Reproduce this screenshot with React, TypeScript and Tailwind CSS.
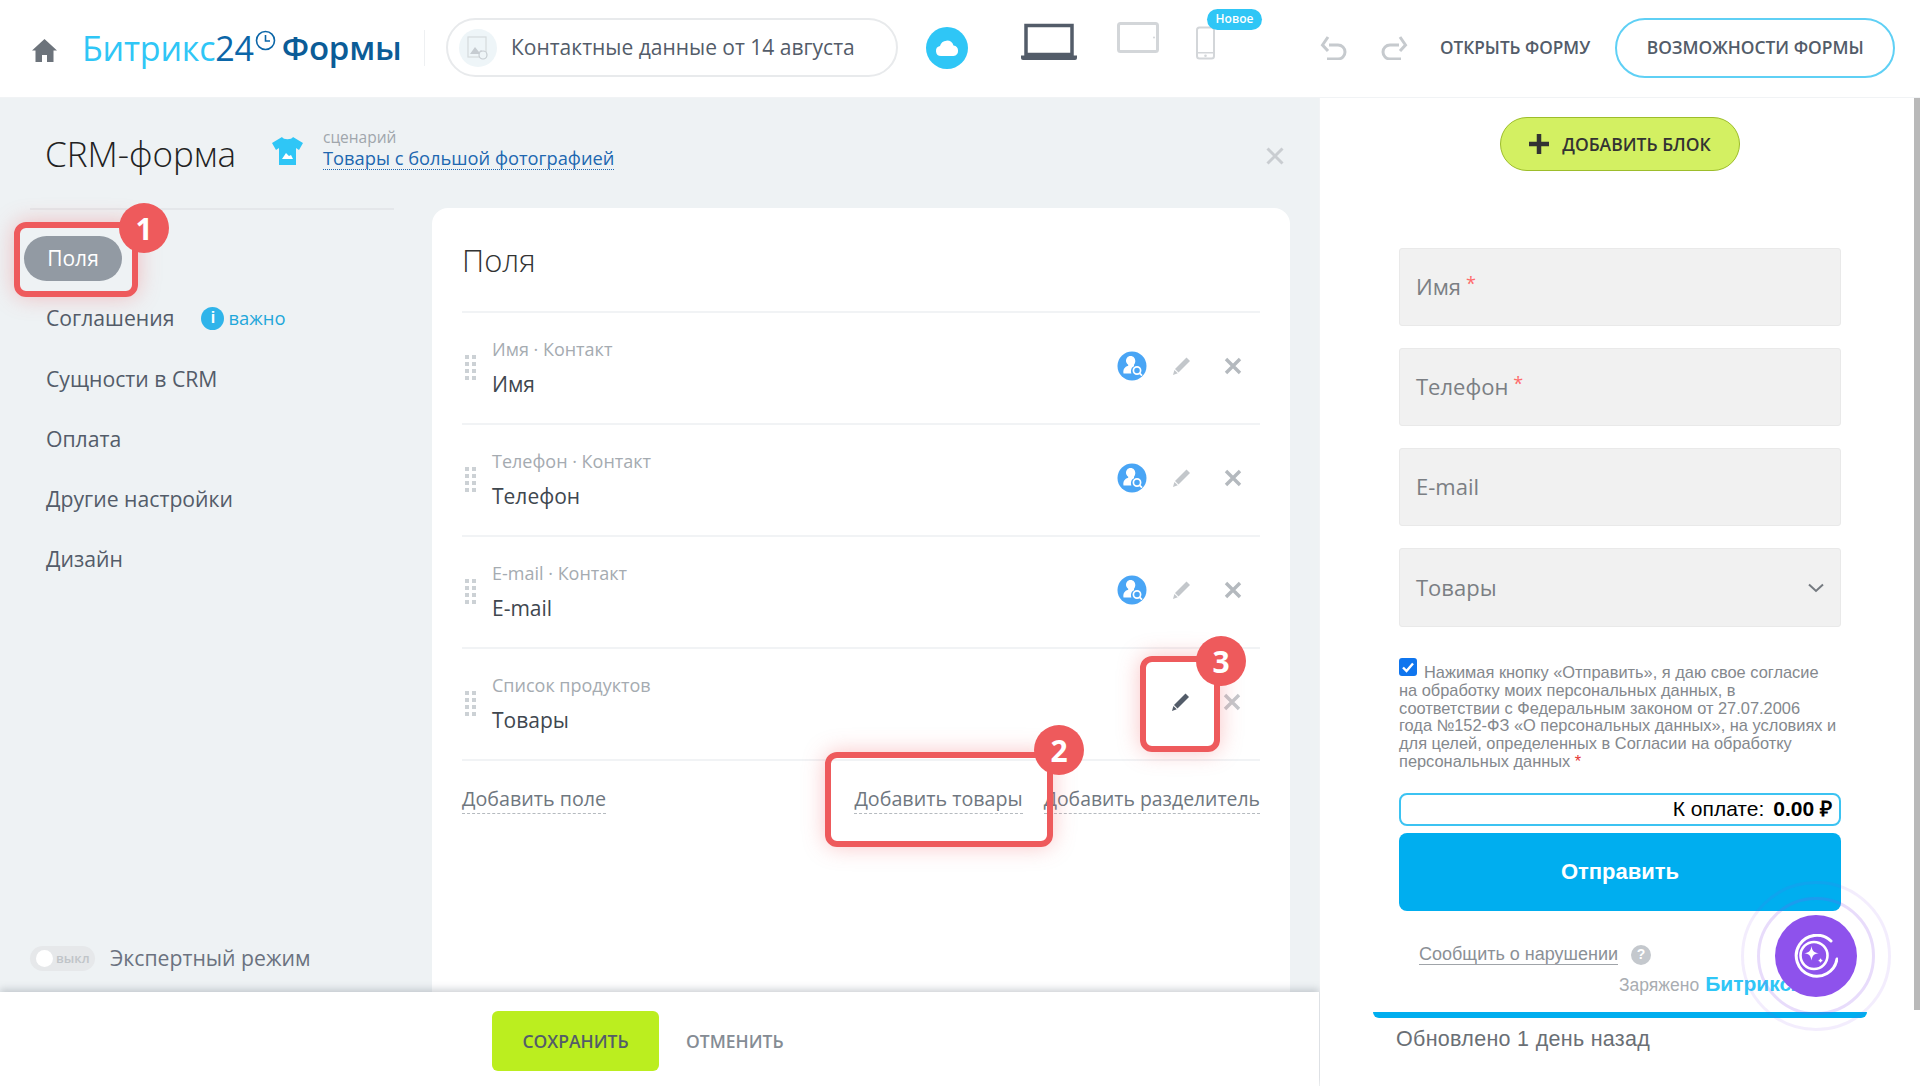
const sans = "font-['Open_Sans','Noto_Sans',sans-serif]";
const arial = "font-['Liberation_Sans',Arial,sans-serif]";

const navItems = ["Соглашения", "Сущности в CRM", "Оплата", "Другие настройки", "Дизайн"];
const fields = [
  { label: "Имя · Контакт", name: "Имя", crm: true },
  { label: "Телефон · Контакт", name: "Телефон", crm: true },
  { label: "E-mail · Контакт", name: "E-mail", crm: true },
  { label: "Список продуктов", name: "Товары", crm: false },
];
const inputs = ["Имя", "Телефон", "E-mail"];

function Pencil({ color = "#c3c7cb" }: { color?: string }) {
  return (
    <svg width="20" height="20" viewBox="0 0 20 20">
      <path d="M14.500 1.500 18 5 6.500 16.500 3 13Z" fill={color} />
      <path d="M2.400 14 5.800 17.300 1 19Z" fill={color} />
    </svg>
  );
}

function Cross({ color = "#b4b9be" }: { color?: string }) {
  return (
    <svg width="18" height="18" viewBox="0 0 18 18">
      <path d="M2 2 16 16M16 2 2 16" stroke={color} strokeWidth="3.400" />
    </svg>
  );
}

function CrmBadge() {
  return (
    <svg width="30" height="30" viewBox="0 0 30 30">
      <circle cx="15" cy="15" r="14.500" fill="#49a5f5" />
      <path d="M13.500 5c3 0 4.800 2.200 4.800 5 0 1.500-.5 2.800-1.300 3.800v1.500c-2.400.8-3.700 3.800-2.600 7.200H6.500c-.6-4 1-6.700 4.700-7.800v-1C10 12.800 9 11.500 9 10c0-2.800 1.800-5 4.500-5Z" fill="#fff" />
      <circle cx="20" cy="19.500" r="3.600" fill="none" stroke="#fff" strokeWidth="1.700" />
      <path d="m22.500 22.200 2.500 2.500" stroke="#fff" strokeWidth="1.800" />
    </svg>
  );
}

function DragDots() {
  return (
    <div className="mb-[2px] ml-[3px] grid w-[11px] grid-cols-2 gap-x-[3px] gap-y-[3px]">
      {Array.from({ length: 8 }).map((_, i) => (
        <span key={i} className="h-1 w-1 bg-[#ccd1d5]" />
      ))}
    </div>
  );
}

function Marker({ className, badge, badgeClass }: { className: string; badge: string; badgeClass: string }) {
  return (
    <div className={`absolute rounded-[12px] border-[6px] border-[#ee5a5c] shadow-[0_0_22px_rgba(238,90,92,0.35)] ${className}`}>
      <div className={`absolute flex h-[50px] w-[50px] items-center justify-center rounded-full bg-[#ee5a5c] text-[30px] font-bold text-white ${badgeClass}`}>
        {badge}
      </div>
    </div>
  );
}

function Header() {
  return (
    <header className="flex h-[98px] shrink-0 items-center border-b border-[#f1f3f5] bg-white pb-[2px]">
      <svg className="ml-[32px] mt-[4px]" width="25" height="24" viewBox="0 0 25 24">
        <path d="M12.500 1 25 12.500h-3.500V24H15v-7h-5v7H3.500V12.500H0Z" fill="#6c737b" />
      </svg>
      <div className="ml-[25px] flex w-[342px] items-start whitespace-nowrap text-[34px] leading-[40px] tracking-[-0.2px]">
        <span className="text-[#2fc6f6]">Битрикс</span>
        <span className="text-[#0b66a8]">24</span>
        <svg className="ml-[1px] mt-[2px]" width="21" height="21" viewBox="0 0 21 21">
          <circle cx="10.500" cy="10.500" r="9" fill="none" stroke="#0b66a8" strokeWidth="1.600" />
          <path d="M10.500 5v6h4.500" fill="none" stroke="#0b66a8" strokeWidth="1.600" />
        </svg>
        <span className="ml-[6px] text-[33px] font-semibold text-[#0b5c97]">Формы</span>
      </div>
      <div className="h-[36px] w-px bg-[#eef0f2]" />
      <div className="ml-[21px] flex h-[59px] w-[452px] items-center rounded-full border-2 border-[#e8eaec] pl-[11px]">
        <div className="flex h-[38px] w-[38px] items-center justify-center rounded-full bg-[#eef5f8]">
          <svg width="22" height="24" viewBox="0 0 22 24">
            <rect x="1" y="1" width="18" height="20" fill="none" stroke="#d5dadd" strokeWidth="1.200" />
            <path d="M3 18l5-7 4 5 2-2 4 4Z" fill="#c6ccd1" />
            <circle cx="16" cy="19" r="4" fill="#eef5f8" stroke="#c6ccd1" strokeWidth="1.200" />
          </svg>
        </div>
        <span className="ml-[14px] text-[21px] text-[#535c69]">Контактные данные от 14 августа</span>
      </div>
      <div className="ml-[28px] flex h-[42px] w-[42px] items-center justify-center rounded-full bg-[#2fc6f6]">
        <svg width="24" height="18" viewBox="0 0 24 18">
          <path d="M6 17a5 5 0 0 1-1-9.900 7 7 0 0 1 13.500-.6A5.300 5.300 0 0 1 18.500 17Z" fill="#fff" />
        </svg>
      </div>
      <svg className="ml-[52px] mb-[12px]" width="58" height="38" viewBox="0 0 58 38">
        <path d="M6 2.500h46v29H6Z" fill="#fff" stroke="#535c69" strokeWidth="3.500" />
        <path d="M1 32.500h56v2.500a2 2 0 0 1-2 2H3a2 2 0 0 1-2-2Z" fill="#535c69" />
      </svg>
      <svg className="ml-[39px] mb-[20px]" width="42" height="31" viewBox="0 0 42 31">
        <rect x="1.500" y="1.500" width="39" height="28" rx="2" fill="#fff" stroke="#d3d6d9" strokeWidth="3" />
        <circle cx="37" cy="15.500" r="1" fill="#d3d6d9" />
      </svg>
      <div className="relative ml-[36px] mb-[10px]">
        <svg width="22" height="34" viewBox="0 0 22 34">
          <rect x="2" y="1.500" width="17" height="31" rx="2.500" fill="#fff" stroke="#d3d6d9" strokeWidth="2" />
          <rect x="2" y="26" width="17" height="1.500" fill="#d3d6d9" />
          <circle cx="10.500" cy="29.800" r="1.300" fill="#d3d6d9" />
        </svg>
        <span className="absolute left-[12px] top-[-17px] flex h-[21px] w-[55px] items-center justify-center rounded-full bg-[#2fc6f6] text-[12px] font-semibold text-white">
          Новое
        </span>
      </div>
      <svg className="ml-[103px]" width="28" height="24" viewBox="0 0 28 24">
        <path d="M9 9h9a7 7 0 0 1 0 14H7" fill="none" stroke="#c6cace" strokeWidth="3" />
        <path d="M8 1 2.500 9 8 15" fill="none" stroke="#c6cace" strokeWidth="3" />
      </svg>
      <svg className="ml-[32px]" width="28" height="24" viewBox="0 0 28 24">
        <path d="M19 9h-9a7 7 0 0 0 0 14h11" fill="none" stroke="#c6cace" strokeWidth="3" />
        <path d="M20 1l5.500 8L20 15" fill="none" stroke="#c6cace" strokeWidth="3" />
      </svg>
      <span className="ml-[32px] whitespace-nowrap text-[17.200px] font-semibold text-[#535c69]">ОТКРЫТЬ ФОРМУ</span>
      <div className="ml-[25px] flex h-[60px] w-[280px] items-center justify-center rounded-full border-2 border-[#5fd0f5] text-[17.400px] font-semibold text-[#535c69]">
        ВОЗМОЖНОСТИ ФОРМЫ
      </div>
    </header>
  );
}

function Sidebar() {
  return (
    <aside className="flex w-[432px] shrink-0 flex-col pl-[24px]">
      <div className="ml-[6px] w-[364px] border-t-2 border-[#e4e7ea]" />
      <div className="mt-[26px] flex h-[45px] w-[98px] items-center justify-center rounded-full bg-[#929aa3] pt-[1px] text-[21px] text-white">
        Поля
      </div>
      <ul className="mt-[7px] flex flex-col pl-[22px] text-[21.200px] text-[#535c69]">
        {navItems.map((item, i) => (
          <li key={item} className="flex h-[60.300px] items-center">
            {item}
            {i === 0 && (
              <span className="ml-[27px] flex items-center text-[18.400px] text-[#1fa7da]">
                <span className={`mr-[4px] flex h-[23px] w-[23px] items-center justify-center rounded-full bg-[#2fb4ea] text-[16px] font-bold text-white ${arial}`}>
                  i
                </span>
                важно
              </span>
            )}
          </li>
        ))}
      </ul>
      <div className="mt-auto mb-[18px] ml-[6px] flex items-center">
        <div className="flex h-[25px] w-[65px] items-center rounded-full bg-[#e6e8ea] pl-[6px]">
          <span className="h-[17px] w-[17px] rounded-full bg-white" />
          <span className="ml-[3px] text-[13px] font-semibold leading-none text-[#c0c4c8]">выкл</span>
        </div>
        <span className="ml-[15px] text-[21.200px] text-[#6b7280]">Экспертный режим</span>
      </div>
    </aside>
  );
}

function FieldsCard() {
  return (
    <section className="w-[858px] rounded-t-[16px] bg-white px-[30px]">
      <h2 className="flex h-[103px] items-center pt-[2px] text-[31px] font-light text-[#333]">Поля</h2>
      {fields.map((f) => (
        <div key={f.label} className="flex h-[112px] items-center border-t-2 border-[#f1f3f5]">
          <DragDots />
          <div className="ml-[16px] flex-1 pb-[2px]">
            <div className="text-[18px] leading-[24px] text-[#a5abb1]">{f.label}</div>
            <div className="mt-[9px] text-[21px] leading-[28px] text-[#40474f]">{f.name}</div>
          </div>
          {f.crm ? (
            <div className="mb-[5px] flex items-center">
              <CrmBadge />
              <span className="ml-[25px]"><Pencil /></span>
              <span className="ml-[32px] mr-[18px]"><Cross /></span>
            </div>
          ) : (
            <div className="mb-[4px] flex items-center">
              <Pencil color="#535c69" />
              <span className="ml-[32px] mr-[19px]"><Cross color="#c3c7cb" /></span>
            </div>
          )}
        </div>
      ))}
      <div className="flex items-start justify-between border-t-2 border-[#f1f3f5] pt-[24px] text-[19.700px] leading-[28px] text-[#6f7780]">
        <span className="border-b border-dashed border-[#b5babf]">Добавить поле</span>
        <div className="flex gap-[21px]">
          <span className="border-b border-dashed border-[#b5babf]">Добавить товары</span>
          <span className="border-b border-dashed border-[#b5babf] text-[19.400px]">Добавить разделитель</span>
        </div>
      </div>
    </section>
  );
}

function FormPreview() {
  return (
    <aside className="relative flex flex-1 flex-col items-center overflow-hidden bg-white">
      <div className="absolute right-0 top-0 h-[912px] w-[6px] bg-[#b9b9b9]" />
      <div className="mt-[19px] flex h-[54px] w-[240px] items-center justify-center rounded-full border border-[#9dbd2b] bg-[#d3f062] text-[17.500px] font-semibold text-[#333]">
        <svg className="mr-[13px]" width="20" height="20" viewBox="0 0 20 20">
          <path d="M10 0v20M0 10h20" stroke="#333" strokeWidth="4.500" />
        </svg>
        ДОБАВИТЬ БЛОК
      </div>
      <div className="mt-[77px] flex w-[442px] flex-col gap-[22px]">
        {inputs.map((p) => (
          <div key={p} className="flex h-[78px] items-center rounded-[3px] border border-[#e9e9e9] bg-[#f1f1f1] pb-[2px] pl-[16px] text-[22px] text-[#7b7f84]">
            {p}
            {p !== "E-mail" && <span className="ml-[5px] -translate-y-[3px] text-[18px] text-[#ff6b6b]">*</span>}
          </div>
        ))}
        <div className="flex h-[79px] items-center justify-between rounded-[3px] border border-[#e9e9e9] bg-[#f1f1f1] px-[16px] text-[22px] text-[#7b7f84]">
          Товары
          <svg width="16" height="10" viewBox="0 0 16 10">
            <path d="M1 1.500 8 8l7-6.500" fill="none" stroke="#757a80" strokeWidth="2" />
          </svg>
        </div>
      </div>
      <div className={`mt-[30px] h-[120px] w-[442px] whitespace-nowrap pt-[3px] text-[16.400px] leading-[17.800px] text-[#84888d] ${arial}`}>
        <svg className="mr-[7px] inline-block -translate-y-[2px] align-baseline" width="18" height="18" viewBox="0 0 18 18">
          <rect width="18" height="18" rx="3" fill="#0f75ee" />
          <path d="M4 9.500 7.500 13 14 5.500" fill="none" stroke="#fff" strokeWidth="2.400" />
        </svg>
        Нажимая кнопку «Отправить», я даю свое согласие
        <br />
        на обработку моих персональных данных, в
        <br />
        соответствии с Федеральным законом от 27.07.2006
        <br />
        года №152-ФЗ «О персональных данных», на условиях и
        <br />
        для целей, определенных в Согласии на обработку
        <br />
        персональных данных <span className="text-[#e53935]">*</span>
      </div>
      <div className={`mt-[16px] flex h-[33px] w-[442px] items-center justify-end rounded-[8px] border-2 border-[#3cc3f2] pb-[2px] pr-[7px] text-[21px] text-black ${arial}`}>
        К оплате:<b className="ml-[9px]">0.00 ₽</b>
      </div>
      <div className={`mt-[7px] flex h-[78px] w-[442px] shrink-0 items-center justify-center rounded-[8px] bg-[#00aeef] pb-[2px] text-[22px] font-bold text-white ${arial}`}>
        Отправить
      </div>
      <div className={`mt-[33px] flex w-[442px] items-center pl-[20px] text-[18px] text-[#8b9096] ${arial}`}>
        <span className="border-b border-[#a0a4a9] leading-[20px]">Сообщить о нарушении</span>
        <span className="ml-[13px] flex h-[20px] w-[20px] items-center justify-center rounded-full bg-[#c4c8cd] text-[14px] font-bold text-white">?</span>
      </div>
      <div className={`mt-[3px] flex w-full items-baseline whitespace-nowrap pl-[299px] text-[17.500px] text-[#a9adb2] ${arial}`}>
        Заряжено
        <b className="ml-[6px] text-[21px] text-[#2fc6f6]">Битрикс24</b>
      </div>
      <div className="mt-[12px] h-[6px] w-[494px] shrink-0 rounded-b-[10px] bg-[#00aeef]" />
      <div className={`mt-[5px] w-[494px] pl-[23px] text-[21.500px] tracking-[0.3px] text-[#6a6f75] ${arial}`}>
        Обновлено 1 день назад
      </div>
      <div className="absolute left-[421px] top-[783px] flex h-[150px] w-[150px] items-center justify-center rounded-full border-[3px] border-[#8e52ec]/10">
        <div className="flex h-[118px] w-[118px] items-center justify-center rounded-full border-[3px] border-[#8e52ec]/20">
          <div className="flex h-[82px] w-[82px] items-center justify-center rounded-full bg-[#8e52ec]">
            <svg width="44" height="44" viewBox="0 0 44 44">
              <path d="M37 7A20.500 20.500 0 1 0 43 25" fill="none" stroke="#fff" strokeWidth="3" strokeLinecap="round" />
              <circle cx="20" cy="21.500" r="13.500" fill="none" stroke="#fff" strokeWidth="2.600" />
              <path d="M17.500 12c.8 5 2.300 6.500 7.300 7.300-5 .8-6.500 2.300-7.300 7.300-.8-5-2.300-6.500-7.300-7.300 5-.8 6.500-2.300 7.300-7.300Z" fill="#fff" />
              <path d="M26.500 22.500c.5 2.800 1.300 3.600 4 4-2.700.5-3.500 1.300-4 4-.4-2.700-1.200-3.500-4-4 2.800-.4 3.600-1.200 4-4Z" fill="#fff" stroke="#8e52ec" strokeWidth="1" />
            </svg>
          </div>
        </div>
      </div>
    </aside>
  );
}

export default function App() {
  return (
    <div className={`relative flex h-[1086px] w-[1920px] flex-col overflow-hidden bg-white ${sans}`}>
      <Header />
      <div className="flex min-h-0 flex-1">
        <div className="flex w-[1320px] shrink-0 flex-col border-r border-[#f1f3f5]">
          <main className="flex min-h-0 flex-1 flex-col bg-[#eef2f4]">
            <div className="flex h-[110px] shrink-0 items-start pl-[45px] pr-[35px]">
              <h1 className="mt-[31px] text-[35px] font-light leading-[50px] text-[#222]">CRM-форма</h1>
              <svg className="ml-[36px] mt-[39px]" width="31" height="28" viewBox="0 0 31 28">
                <path d="M10 0c1.500 3 9.500 3 11 0l10 6-4 7-3-2v17H7V11l-3 2-4-7Z" fill="#2fc6f6" />
                <path d="M10 22l4-6 3 3 2-1 2 4Z" fill="#fff" />
              </svg>
              <div className="ml-[20px] mt-[29px]">
                <div className="text-[15.500px] leading-[20px] text-[#a0a6ac]">сценарий</div>
                <div className="border-b border-dotted border-[#2067b0] text-[18.300px] leading-[22px] text-[#2067b0]">
                  Товары с большой фотографией
                </div>
              </div>
              <svg className="ml-auto mt-[49px]" width="18" height="18" viewBox="0 0 18 18">
                <path d="M1.500 1.500 16.500 16.500M16.500 1.500 1.500 16.500" stroke="#c9cdd1" strokeWidth="3" />
              </svg>
            </div>
            <div className="flex min-h-0 flex-1">
              <Sidebar />
              <FieldsCard />
            </div>
          </main>
          <footer className="flex h-[94px] shrink-0 items-center bg-white pl-[492px] pt-[4px] shadow-[0_-3px_7px_rgba(120,130,140,0.35)]">
            <div className="flex h-[60px] w-[167px] items-center justify-center rounded-[6px] bg-[#bbee1f] text-[17.500px] font-semibold text-[#535c69]">
              СОХРАНИТЬ
            </div>
            <span className="ml-[27px] text-[17.500px] font-semibold text-[#858c94]">ОТМЕНИТЬ</span>
          </footer>
        </div>
        <FormPreview />
      </div>
      <Marker className="left-[14px] top-[222px] h-[75px] w-[124px]" badge="1" badgeClass="left-[99px] top-[-25px]" />
      <Marker className="left-[825px] top-[752px] h-[95px] w-[228px]" badge="2" badgeClass="left-[203px] top-[-33px]" />
      <Marker className="left-[1140px] top-[656px] h-[96px] w-[80px]" badge="3" badgeClass="left-[50px] top-[-26px]" />
    </div>
  );
}
